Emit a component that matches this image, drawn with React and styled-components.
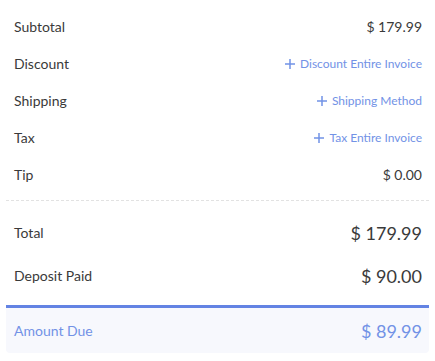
import React from "react";
import styled, { createGlobalStyle } from "styled-components";

const Global = createGlobalStyle`
  html, body { margin: 0; padding: 0; background: #fff; }
  body { font-family: Lato, "Open Sans", sans-serif; color: #3a3a3a; }
`;

const Wrap = styled.div`
  padding: 8px 6px 8px 6px;
`;

const Section = styled.div`
  display: flex;
  flex-direction: column;
  padding: ${(p) => p.$pad || "0"};
  border-bottom: ${(p) => (p.$dashed ? "1px dashed #e2e2e2" : "none")};
`;

const Row = styled.div`
  display: flex;
  align-items: center;
  justify-content: space-between;
  height: ${(p) => p.$h || 37}px;
  padding: 0 7px 0 8px;
`;

const Label = styled.span`
  font-size: 14px;
  color: ${(p) => (p.$blue ? "#7292e6" : "#3a3a3a")};
`;

const Value = styled.span`
  font-size: ${(p) => (p.$big ? 18 : 14)}px;
  color: ${(p) => (p.$blue ? "#7292e6" : "#3a3a3a")};
`;

const Action = styled.span`
  display: flex;
  align-items: center;
  gap: 5px;
  font-size: 12px;
  color: #7292e6;
`;

const Due = styled.div`
  border-top: 3px solid #6383e3;
  background: #f7f8fd;
  border-radius: 0 0 4px 4px;
`;

const Plus = () => (
  <svg width="10" height="10" viewBox="0 0 10 10">
    <path d="M5 0v10M0 5h10" stroke="#7292e6" strokeWidth="1.5" />
  </svg>
);

export default function App() {
  return (
    <>
      <Global />
      <Wrap>
        <Section $dashed $pad="0 0 7px 0">
          <Row>
            <Label>Subtotal</Label>
            <Value>$ 179.99</Value>
          </Row>
          <Row>
            <Label>Discount</Label>
            <Action><Plus />Discount Entire Invoice</Action>
          </Row>
          <Row>
            <Label>Shipping</Label>
            <Action><Plus />Shipping Method</Action>
          </Row>
          <Row>
            <Label>Tax</Label>
            <Action><Plus />Tax Entire Invoice</Action>
          </Row>
          <Row>
            <Label>Tip</Label>
            <Value>$ 0.00</Value>
          </Row>
        </Section>
        <Section $pad="10px 0 8px 0">
          <Row $h={43}>
            <Label>Total</Label>
            <Value $big>$ 179.99</Value>
          </Row>
          <Row $h={43}>
            <Label>Deposit Paid</Label>
            <Value $big>$ 90.00</Value>
          </Row>
        </Section>
        <Due>
          <Row $h={45}>
            <Label $blue>Amount Due</Label>
            <Value $big $blue>$ 89.99</Value>
          </Row>
        </Due>
      </Wrap>
    </>
  );
}
